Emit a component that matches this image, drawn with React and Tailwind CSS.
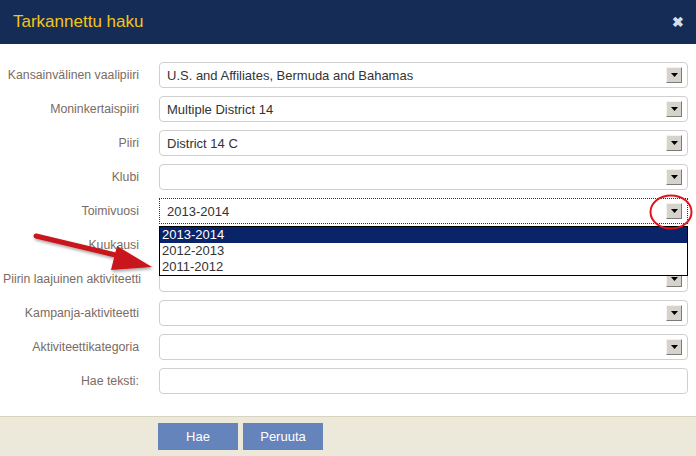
import React from 'react';

const rows = [
  { label: 'Kansainvälinen vaalipiiri', value: 'U.S. and Affiliates, Bermuda and Bahamas' },
  { label: 'Moninkertaispiiri', value: 'Multiple District 14' },
  { label: 'Piiri', value: 'District 14 C' },
  { label: 'Klubi', value: '' },
  { label: 'Toimivuosi', value: '2013-2014', open: true },
  { label: 'Kuukausi', value: '' },
  { label: 'Piirin laajuinen aktiviteetti', value: '' },
  { label: 'Kampanja-aktiviteetti', value: '' },
  { label: 'Aktiviteettikategoria', value: '' },
  { label: 'Hae teksti:', value: '', input: true },
];

const years = ['2013-2014', '2012-2013', '2011-2012'];

function ArrowButton() {
  return (
    <div className="w-[16px] h-[16px] bg-[#d6d3cc] border border-t-[#f4f3ef] border-l-[#f4f3ef] border-r-[#7d7b76] border-b-[#7d7b76] flex items-center justify-center">
      <svg width="7" height="4" viewBox="0 0 7 4">
        <path d="M0 0 H7 L3.5 4 Z" fill="#000" />
      </svg>
    </div>
  );
}

function Field({ row }) {
  const border = row.open
    ? 'border border-dotted border-[#333] rounded-none'
    : 'border border-[#cfcfcf] rounded-[4px]';
  return (
    <div className={`relative flex-1 h-[26px] flex items-center pl-[7px] pr-[5px] bg-white ${border}`}>
      <span className="flex-1 text-[13px] text-[#333] leading-none">{row.value}</span>
      {!row.input && <ArrowButton />}
      {row.open && (
        <>
          <div className="absolute left-[-1px] right-[-1px] top-[27px] z-10 bg-white border border-black">
            {years.map((y, i) => (
              <div
                key={y}
                className={`h-[16px] pl-[2px] text-[13px] leading-[16px] ${i === 0 ? 'bg-[#0a246a] text-white' : 'text-[#333]'}`}
              >
                {y}
              </div>
            ))}
          </div>
          <svg className="absolute right-[-6px] top-[-6px] z-20" width="44" height="38" viewBox="0 0 44 38">
            <ellipse cx="22" cy="19" rx="20.5" ry="16.5" fill="none" stroke="#e0141c" strokeWidth="2" />
          </svg>
        </>
      )}
    </div>
  );
}

export default function App() {
  return (
    <div className="relative w-[696px] h-[456px] bg-white overflow-hidden font-['Liberation_Sans',Arial,sans-serif]">
      <div className="h-[44px] bg-[#152c56] flex items-center justify-between pl-[13px] pr-[12px]">
        <span className="text-[17px] text-[#f5c515]">Tarkannettu haku</span>
        <span className="text-[14px] text-[#d9dde4] font-bold">✖</span>
      </div>

      <div className="flex flex-col gap-[8px] pt-[18px] pl-[3px] pr-[8px] h-[372px]">
        {rows.map((row) => (
          <div key={row.label} className="flex items-center gap-[20px]">
            <div className="w-[136px] text-right text-[12.3px] text-[#7b6c63] whitespace-nowrap">{row.label}</div>
            <Field row={row} />
          </div>
        ))}
      </div>

      <div className="h-[40px] bg-[#ece9db] border-t border-[#d9d4c0] flex items-center gap-[5px] pl-[158px]">
        <button className="w-[80px] h-[27px] bg-[#6584bc] text-white text-[13px]">Hae</button>
        <button className="w-[80px] h-[27px] bg-[#6584bc] text-white text-[13px]">Peruuta</button>
      </div>

      <svg className="absolute left-[30px] top-[228px] z-30" width="130" height="50" viewBox="0 0 130 50">
        <defs>
          <filter id="sh" x="-20%" y="-40%" width="140%" height="180%">
            <feDropShadow dx="1" dy="2" stdDeviation="1.5" floodColor="#000" floodOpacity="0.35" />
          </filter>
        </defs>
        <g filter="url(#sh)">
          <path d="M6 8 L98 30" stroke="#c8141b" strokeWidth="5" strokeLinecap="round" />
          <path d="M87 18 L122 39 L81 42 Z" fill="#c8141b" />
        </g>
      </svg>
    </div>
  );
}
